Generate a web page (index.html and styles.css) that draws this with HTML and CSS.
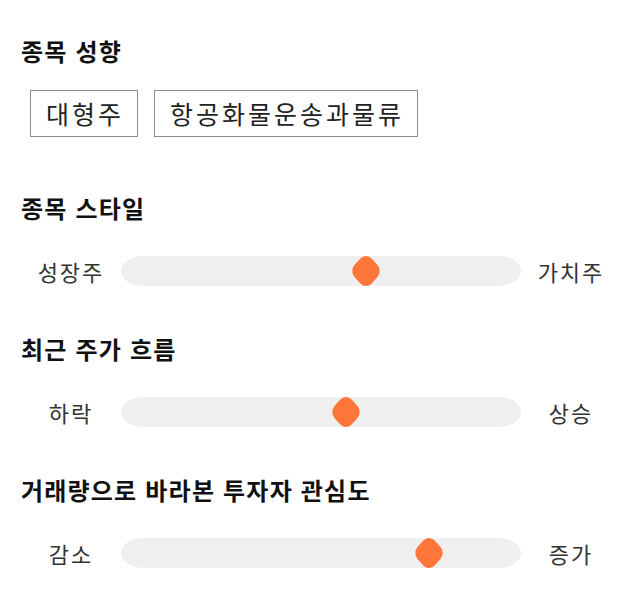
FILE: index.html
```html
<!DOCTYPE html>
<html lang="ko">
<head>
  <meta charset="UTF-8" />
  <meta name="viewport" content="width=device-width, initial-scale=1.0" />
  <title>종목 분석</title>
  <link rel="stylesheet" href="styles.css">
</head>
<body>
  <div class="panel">
    <h2 class="section-title first">종목 성향</h2>
    <div class="tags">
      <span class="tag">대형주</span>
      <span class="tag">항공화물운송과물류</span>
    </div>

    <h2 class="section-title">종목 스타일</h2>
    <div class="slider-row">
      <span class="side">성장주</span>
      <div class="track"><span class="thumb" style="left: 61.3%;"></span></div>
      <span class="side">가치주</span>
    </div>

    <h2 class="section-title">최근 주가 흐름</h2>
    <div class="slider-row">
      <span class="side">하락</span>
      <div class="track"><span class="thumb" style="left: 56.3%;"></span></div>
      <span class="side">상승</span>
    </div>

    <h2 class="section-title">거래량으로 바라본 투자자 관심도</h2>
    <div class="slider-row">
      <span class="side">감소</span>
      <div class="track"><span class="thumb" style="left: 76.9%;"></span></div>
      <span class="side">증가</span>
    </div>
  </div>
</body>
</html>
```

FILE: styles.css
```css
body {
  margin: 0;
  background: #fff;
  font-family: 'Noto Sans CJK KR', 'Noto Sans', sans-serif;
  color: #222;
}
.panel {
  padding: 35px 19px 0 21px;
}
.section-title {
  margin: 55px 0 0;
  font-size: 24px;
  letter-spacing: 1.2px;
  line-height: 32px;
  font-weight: bold;
  color: #111;
}
.section-title.first {
  margin-top: 0;
}
.tags {
  display: flex;
  gap: 16px;
  margin-top: 23px;
  padding-left: 9px;
}
.tag {
  height: 45px;
  line-height: 45px;
  padding: 0 13px 0 15px;
  border: 1px solid #8c8c8c;
  font-size: 25px;
  letter-spacing: 3px;
  color: #222;
}
.slider-row {
  display: flex;
  align-items: center;
  margin-top: 32px;
}
.slider-row + .section-title {
  margin-top: 47px;
}
.side {
  width: 100px;
  line-height: 30px;
  text-align: center;
  font-size: 22px;
  letter-spacing: 2px;
  color: #333;
}
.track {
  flex: 1;
  height: 30px;
  position: relative;
  background: #efefef;
  border-radius: 22px / 15px;
}
.thumb {
  position: absolute;
  top: 50%;
  width: 24px;
  height: 24px;
  background: #ff763b;
  border-radius: 8px;
  transform: translate(-50%, -50%) scaleY(1.1) rotate(45deg);
}
```
